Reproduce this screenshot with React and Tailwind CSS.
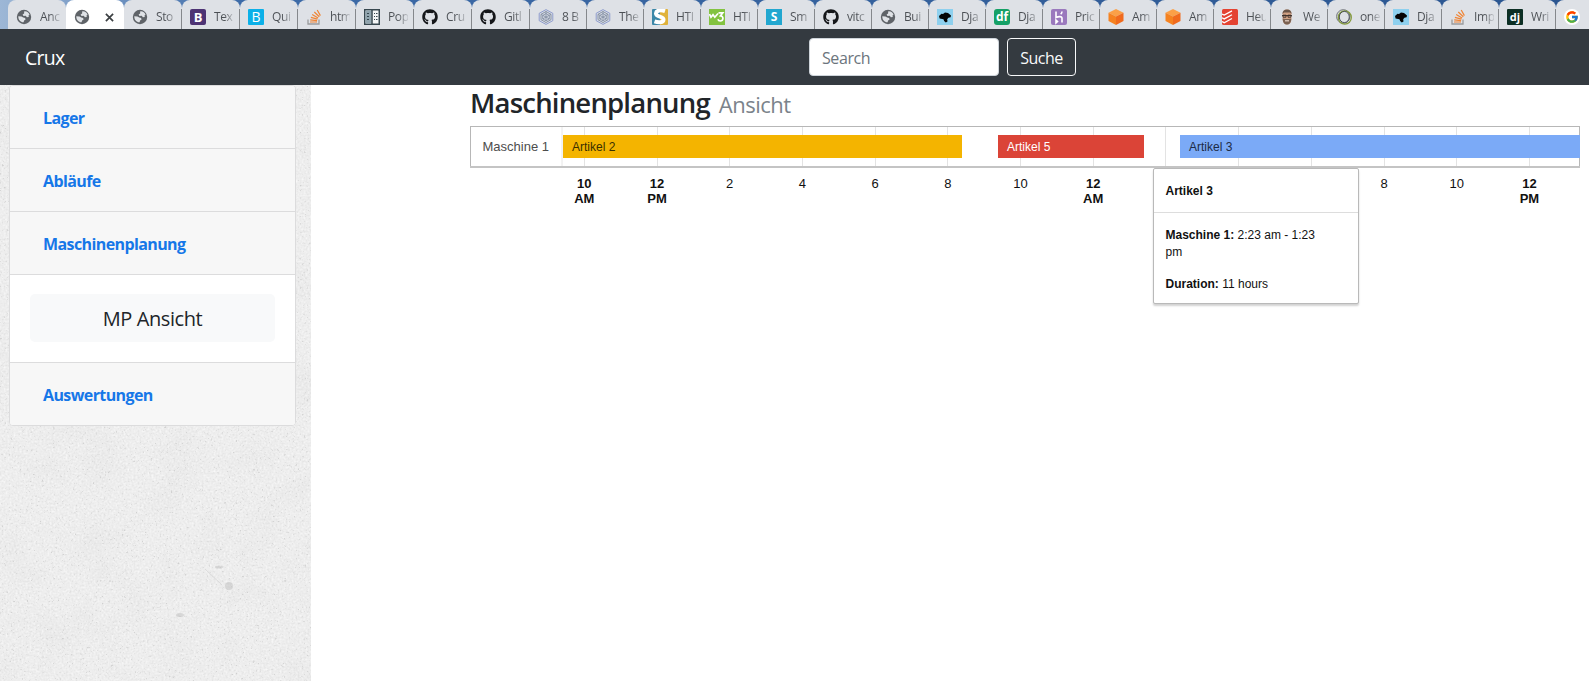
import React from "react";
import { FaGithub } from "react-icons/fa";
import { FcGoogle } from "react-icons/fc";

const Globe = () => (
  <svg viewBox="0 0 16 16" className="size-4">
    <circle cx="8" cy="8" r="7.200" fill="#5f6368" />
    <path d="M8.200 2.400c2.700-.3 4.600 1.300 5.300 3.400l-1 .6.300 1.600-1.900.2-1.200-1.400-2.200.2-.9-1.600 1.500-.9z" fill="#dfe2e6" />
    <path d="M2.300 7.200l3.200.2 1.700 1.200 1.900.3.500 1.500-1.500 1-.5 1.800C4.500 13.300 2.200 10.800 2.300 7.200z" fill="#dfe2e6" />
  </svg>
);
const Github = () => <FaGithub className="size-4 text-[#15171a]" />;

const Stack = () => (
  <svg viewBox="0 0 16 16" className="size-4" fill="none">
    <path d="M2 10.500V15h11v-4.500" stroke="#9a9b9d" strokeWidth="1.300" />
    <path d="M4 13h7M4.200 10.900l6.900.7M4.900 8.400l6.600 1.800M6.200 5.600l5.900 3.300M8.300 3l5 4.700M11.200 1l3.200 5.600" stroke="#f08434" strokeWidth="1.200" />
  </svg>
);

const Popup = () => (
  <svg viewBox="0 0 16 16" className="size-4">
    <rect x="0.750" y="0.750" width="14.500" height="14.500" fill="#f4f6f7" stroke="#37474f" strokeWidth="1.500" />
    <rect x="1.500" y="1.500" width="6" height="13" fill="#90a4ae" />
    <path d="M8 1v14" stroke="#37474f" strokeWidth="1.500" />
    <path d="M3 4.500h2M3 7.500h2M3 10.500h2M10 4.500h1M12 4.500h1.500M10 7.500h1M12 7.500h1.500M10 10.500h1M12 10.500h1.500" stroke="#37474f" strokeWidth="1" />
  </svg>
);

const Hexagon = () => (
  <svg viewBox="0 0 16 16" className="size-4" fill="none" stroke="#8795c8" strokeWidth="0.900">
    <path d="M8 .6l6.800 3.700v7.400L8 15.400l-6.800-3.700V4.300z" fill="#d9dee8" />
    <path d="M8 2.500l5 2.800v5.400l-5 2.800-5-2.800V5.300z" stroke="#7f8a9c" />
    <path d="M8 4.500l3.300 2v3.400L8 11.700 4.700 9.900V6.500zM8 2.500v9M3 5.300l8.300 4.600M13 5.300L4.700 9.900" stroke="#8490a4" />
  </svg>
);

const SLogo = () => (
  <svg viewBox="0 0 16 16" className="size-4">
    <path d="M1 0h8v16H1a1 1 0 0 1-1-1V1a1 1 0 0 1 1-1z" fill="#3b87a8" />
    <path d="M8 0h7a1 1 0 0 1 1 1v14a1 1 0 0 1-1 1H8z" fill="#e0b23a" />
    <path d="M13 2.200C9 .8 4.300 1 4 4.400c-.3 4 7.600 2.500 7.500 6.200-.1 3-5 3.200-9 1.800" fill="none" stroke="#fff" strokeWidth="4" />
  </svg>
);

const W3 = () => (
  <svg viewBox="0 0 16 16" className="size-4">
    <rect width="16" height="16" fill="#83c341" />
    <path d="M.5 5l1.500 3.200L4 5.700l1.800 2.500L9 4.500M9.500 3.800h4.300l-2.300 3c3.500.2 3 5.200-.3 5.200-1.300 0-2-.7-2.300-1.700" fill="none" stroke="#fff" strokeWidth="1.700" />
  </svg>
);

const Horse = () => (
  <svg viewBox="0 0 16 16" className="size-4">
    <rect width="16" height="16" fill="#8ed0ee" />
    <path d="M2 7l2.500-2.200L6 5l2-1.600 3 .6 3 2.600-.4 1.600-2.200.6-1.200 1.400.3 2.300-1.700 1-1.700-1.500-.6-1.800-3.900-.8z" fill="#050505" />
  </svg>
);

const Cube = () => (
  <svg viewBox="0 0 16 16" className="size-4">
    <path d="M8 0l7.500 3.800L8 7.600.5 3.800z" fill="#fba047" />
    <path d="M.5 3.800L8 7.600V16L.5 12z" fill="#f58220" />
    <path d="M15.500 3.800L8 7.600V16l7.500-4z" fill="#f06a1d" />
  </svg>
);

const Face = () => (
  <svg viewBox="0 0 16 16" className="size-4">
    <path d="M3.500 5C3.500 2 5 .5 8 .5S12.500 2 12.500 5l-.2 6c-.5 3-2 4.500-4.300 4.500S4.200 14 3.700 11z" fill="#d0a083" />
    <path d="M3.500 5C3.500 2 5 .5 8 .5S12.500 2 12.500 5L11 3.500H5z" fill="#6a5548" />
    <path d="M3.700 9.500L6 10h4l2.300-.5c0 4-1.800 6-4.300 6s-4.300-2-4.300-6z" fill="#7b6252" />
    <path d="M3 6.500h10M4 6.200h3v2H4zM9 6.200h3v2H9z" fill="none" stroke="#3c302a" strokeWidth="0.900" />
    <path d="M6 11.800h4" stroke="#e9d6cb" strokeWidth="1.200" />
  </svg>
);

const Rings = () => (
  <svg viewBox="0 0 16 16" className="size-4" fill="none">
    <ellipse cx="7.300" cy="7.500" rx="6.700" ry="6.800" stroke="#6f7378" strokeWidth="1" />
    <ellipse cx="8.800" cy="8.500" rx="6.500" ry="6.700" stroke="#849a3c" strokeWidth="1.300" />
    <ellipse cx="8.300" cy="8" rx="5" ry="5.600" stroke="#4f555c" strokeWidth="1" />
  </svg>
);

const Bootstrap = () => (
  <span className="flex size-4 items-center justify-center rounded-[2px] bg-[#4d3374] text-[13px] leading-none font-bold text-white">B</span>
);
const BootstrapBlue = () => (
  <span className="flex size-4 items-center justify-center rounded-[1px] bg-[#0cb0e8] text-[14px] leading-none text-white">B</span>
);
const SBlue = () => (
  <span className="flex size-4 items-center justify-center bg-[#22a7d0] text-[12px] leading-none font-bold text-white">S</span>
);
const Df = () => (
  <span className="flex size-4 items-center justify-center rounded-[3px] bg-[#15a066] text-[12px] leading-none font-bold text-white">df</span>
);
const Dj = () => (
  <span className="flex size-4 items-center justify-center rounded-[1px] bg-[#0c2f24] pb-0.5 text-[11px] leading-none font-bold text-white">dj</span>
);
const Heroku = () => (
  <svg viewBox="0 0 16 16" className="size-4">
    <rect width="16" height="16" rx="2" fill="#9a79bd" />
    <path d="M5 2.500v6c2.500-1.200 6-1.500 6 .8v4.200M11 2.500c0 1.200-.5 2-1.300 2.800M5 11v2.800l1.500-1.400z" fill="none" stroke="#fff" strokeWidth="1.600" />
  </svg>
);
const Todoist = () => (
  <svg viewBox="0 0 16 16" className="size-4">
    <rect width="16" height="16" rx="1.500" fill="#e44332" />
    <path d="M0 5l2.200 1.100L10 1.900M0 8.800l2.200 1.100L10 5.700M0 12.600l2.200 1.100L10 9.500" fill="none" stroke="#fff" strokeWidth="1.300" />
  </svg>
);
const Google = () => (
  <span className="flex size-4 items-center justify-center rounded-full bg-white">
    <FcGoogle className="size-3.5" />
  </span>
);

const TABS = [
  [Globe, "Anc"],
  [Globe, null],
  [Globe, "Sto"],
  [Bootstrap, "Tex"],
  [BootstrapBlue, "Qui"],
  [Stack, "htm"],
  [Popup, "Pop"],
  [Github, "Cru"],
  [Github, "Gitl"],
  [Hexagon, "8 B"],
  [Hexagon, "The"],
  [SLogo, "HTI"],
  [W3, "HTI"],
  [SBlue, "Sm"],
  [Github, "vitc"],
  [Globe, "Bui"],
  [Horse, "Dja"],
  [Df, "Dja"],
  [Heroku, "Pric"],
  [Cube, "Am"],
  [Cube, "Am"],
  [Todoist, "Heu"],
  [Face, "We"],
  [Rings, "one"],
  [Horse, "Dja"],
  [Stack, "Imp"],
  [Dj, "Wri"],
  [Google, "m"],
];

function Tab({ icon: Icon, label, index }) {
  const active = label === null;
  const width = index < 9 ? "w-[58px]" : "w-[57px]";
  return (
    <div className={`${width} flex h-full shrink-0 items-end`}>
      <div
        className={`flex h-full w-full items-center rounded-t-[8px] pt-[5px] pl-[8px] ${active ? "bg-white" : "bg-[#dee1e6]"}`}
      >
        <span className="shrink-0"><Icon /></span>
        {active ? (
          <svg viewBox="0 0 10 10" className="ml-[15px] size-[9px]" stroke="#3c4043" strokeWidth="1.900">
            <path d="M1 1l8 8M9 1L1 9" />
          </svg>
        ) : (
          <span className="ml-[8px] w-[20px] overflow-hidden bg-linear-to-r from-[#4b4f54] from-50% to-[#4b4f54]/15 bg-clip-text text-[12px] leading-4 tracking-[-0.4px] whitespace-nowrap text-transparent">
            {label}
          </span>
        )}
      </div>
      {!active && index > 1 && <span className="-ml-px h-[20px] w-px shrink-0 bg-[#85888c]" />}
    </div>
  );
}

function TabStrip() {
  return (
    <div className="flex h-[29px] w-full overflow-hidden bg-linear-to-r from-[#9db7d6] via-[#3d6ba8] via-15% to-[#2a5590] pl-[8px]">
      {TABS.map(([icon, label], i) => (
        <Tab key={i} icon={icon} label={label} index={i} />
      ))}
    </div>
  );
}

function Navbar() {
  return (
    <nav className="flex h-[56px] items-center bg-[#343a40]">
      <span className="w-[809px] pt-[2px] pl-[25px] text-[19.500px] leading-[30px] tracking-[-0.7px] text-white">Crux</span>
      <div className="flex h-[38px] w-[190px] items-center rounded-[4px] border border-[#ced4da] bg-white px-3 pt-[2px] text-[16px] tracking-[-0.4px] text-[#6c757d]">
        Search
      </div>
      <button className="ml-2 h-[38px] w-[69px] rounded-[4px] border border-[#f8f9fa] pt-px text-[16px] tracking-[-0.5px] text-[#f8f9fa]">
        Suche
      </button>
    </nav>
  );
}

function Texture() {
  return (
    <svg className="absolute inset-0 size-full" aria-hidden="true">
      <filter id="grain" x="0" y="0" width="100%" height="100%" colorInterpolationFilters="sRGB">
        <feTurbulence type="fractalNoise" baseFrequency="0.5" numOctaves="3" seed="4" />
        <feColorMatrix values="0.09 0.05 0 0 0.862  0.09 0.05 0 0 0.862  0.09 0.05 0 0 0.862  0 0 0 0 1" />
      </filter>
      <filter id="specks" x="0" y="0" width="100%" height="100%" colorInterpolationFilters="sRGB">
        <feTurbulence type="fractalNoise" baseFrequency="0.45" numOctaves="3" seed="21" />
        <feColorMatrix values="0 0 0 0 0.72  0 0 0 0 0.72  0 0 0 0 0.72  5 0 0 0 -3.250" />
      </filter>
      <filter id="stain" x="0" y="0" width="100%" height="100%" colorInterpolationFilters="sRGB">
        <feTurbulence type="fractalNoise" baseFrequency="0.025" numOctaves="6" seed="9" />
        <feColorMatrix values="0 0 0 0 0.75  0 0 0 0 0.75  0 0 0 0 0.75  0.7 0 0 0 -0.330" />
      </filter>
      <rect width="100%" height="100%" filter="url(#grain)" />
      <rect width="100%" height="100%" filter="url(#stain)" opacity="0.3" />
      <rect width="100%" height="100%" filter="url(#specks)" opacity="0.5" />
      <g fill="#b4b4b4" opacity="0.4">
        <circle cx="229" cy="501" r="4" />
        <ellipse cx="219" cy="482" rx="4" ry="1.500" />
        <ellipse cx="180" cy="530" rx="4" ry="2" />
      </g>
      <path d="M205 484l17 16" stroke="#c8c8c8" opacity="0.5" />
    </svg>
  );
}

function MenuItem({ children }) {
  return (
    <a className="flex h-[63px] items-center border-b border-[#dcdcdd] bg-[#f7f7f7] pt-px pl-[33px] text-[16px] font-bold tracking-[-0.6px] text-[#1677e8]">
      <span>{children}</span>
    </a>
  );
}

function Sidebar() {
  return (
    <aside className="relative h-[596px] w-[311px] shrink-0 bg-[#ececec]">
      <Texture />
      <div className="relative ml-[9px] w-[287px] overflow-hidden rounded-[4px] border border-[#dcdcdd] bg-white">
        <MenuItem>Lager</MenuItem>
        <MenuItem>Abläufe</MenuItem>
        <MenuItem>Maschinenplanung</MenuItem>
        <div className="flex h-[88px] items-center justify-center border-b border-[#dcdcdd] pb-px">
          <button className="h-[48px] w-[245px] rounded-[5px] bg-[#f8f9fa] pt-px text-[20px] tracking-[-0.4px] text-[#212529]">
            MP Ansicht
          </button>
        </div>
        <div className="-mb-px">
          <MenuItem>Auswertungen</MenuItem>
        </div>
      </div>
    </aside>
  );
}

const BARS = [
  { label: "Artikel 2", x: 93, width: 399, fill: "#f4b400", text: "#3a3000" },
  { label: "Artikel 5", x: 528, width: 146, fill: "#db4437", text: "#ffffff" },
  { label: "Artikel 3", x: 710, width: 400, fill: "#7baaf7", text: "#1d2b45" },
];

const TICKS = [
  ["10", "AM"], ["12", "PM"], ["2"], ["4"], ["6"], ["8"], ["10"],
  ["12", "AM"], [], [], [], ["8"], ["10"], ["12", "PM"],
];

function Timeline() {
  return (
    <svg width="1111" height="90" viewBox="0 0 1111 90" className="block font-['Liberation_Sans',Arial,sans-serif]">
      <path d="M92 1v39" stroke="#e6e6e6" />
      {TICKS.map((_, i) => (
        <rect key={i} x={Math.round(113.8 + i * 72.7)} y="1" width="1" height="39" fill="#e3e3e3" />
      ))}
      <path d="M0 .5h1110M.5 0v41M1109.500 0v41" stroke="#b7b7b7" fill="none" />
      <path d="M0 41h1110" stroke="#c4c4c4" strokeWidth="2" />
      <text x="12.500" y="25" fontSize="13" fill="#4d4d4d">Maschine 1</text>
      {BARS.map((b) => (
        <g key={b.label}>
          <rect x={b.x} y="9" width={b.width} height="23" fill={b.fill} />
          <text x={b.x + 9} y="25" fontSize="12" fill={b.text}>{b.label}</text>
        </g>
      ))}
      {TICKS.map((lines, i) =>
        lines.map((line, row) => (
          <text
            key={`${i}-${row}`}
            x={114.3 + i * 72.7}
            y={62 + row * 15}
            fontSize="13"
            fontWeight={lines.length > 1 ? 700 : 400}
            textAnchor="middle"
            fill="#111"
          >
            {line}
          </text>
        ))
      )}
    </svg>
  );
}

function Tooltip() {
  return (
    <div className="absolute top-[42px] left-[683px] w-[206px] rounded-[2px] border border-[#b9b9b9] bg-white font-['Liberation_Sans',Arial,sans-serif] text-[12px] leading-[17px] text-[#111] shadow-[0_2px_2px_rgba(0,0,0,0.18)]">
      <div className="flex h-[44px] items-center border-b border-[#dddddd] pt-px pl-[11.500px] font-bold">Artikel 3</div>
      <div className="h-[90px] pt-[14px] pr-[30px] pl-[11.500px]">
        <p><b>Maschine 1:</b> 2:23 am - 1:23 pm</p>
        <p className="mt-[15px]"><b>Duration:</b> 11 hours</p>
      </div>
    </div>
  );
}

export default function App() {
  return (
    <div className="h-[682px] w-[1589px] overflow-hidden bg-white font-['Open_Sans','Noto_Sans',sans-serif]">
      <TabStrip />
      <Navbar />
      <div className="flex">
        <Sidebar />
        <main className="ml-[159px]">
          <h3 className="flex h-[41px] items-baseline pt-[1px] text-[27.500px] leading-[34px] font-semibold tracking-[-0.8px] text-[#212529]">
            Maschinenplanung
            <small className="ml-[9px] text-[22px] font-normal tracking-[-0.5px] text-[#7b838b]">Ansicht</small>
          </h3>
          <div className="relative">
            <Timeline />
            <Tooltip />
          </div>
        </main>
      </div>
    </div>
  );
}
